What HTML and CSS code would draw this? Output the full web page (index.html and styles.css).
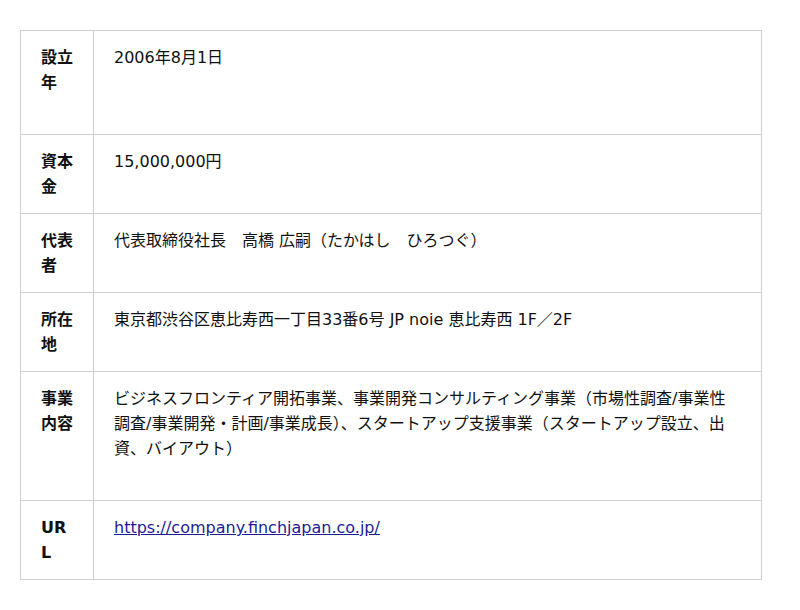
FILE: index.html
```html
<!DOCTYPE html>
<html lang="ja">
<head>
<meta charset="utf-8">
<title>会社概要</title>
<link rel="stylesheet" href="styles.css">
</head>
<body>
<div class="wrap">
  <table class="info">
    <tbody>
      <tr class="extra-2">
        <th>設立年</th>
        <td>2006年8月1日</td>
      </tr>
      <tr>
        <th>資本金</th>
        <td>15,000,000円</td>
      </tr>
      <tr>
        <th>代表者</th>
        <td>代表取締役社長　高橋 広嗣（たかはし　ひろつぐ）</td>
      </tr>
      <tr>
        <th>所在地</th>
        <td>東京都渋谷区恵比寿西一丁目33番6号 JP noie 恵比寿西 1F／2F</td>
      </tr>
      <tr class="extra-1">
        <th>事業内容</th>
        <td>ビジネスフロンティア開拓事業、事業開発コンサルティング事業（市場性調査/事業性調査/事業開発・計画/事業成長）、スタートアップ支援事業（スタートアップ設立、出資、バイアウト）</td>
      </tr>
      <tr>
        <th>URL</th>
        <td><a href="#">https://company.finchjapan.co.jp/</a></td>
      </tr>
    </tbody>
  </table>
</div>
</body>
</html>
```
FILE: styles.css
```css
html, body {
  margin: 0;
  padding: 0;
  background: #fff;
}
.wrap {
  padding: 30px 20px;
}
.info {
  width: 742px;
  border-collapse: collapse;
  table-layout: fixed;
  font-family: "DejaVu Sans", "Noto Sans CJK JP", sans-serif;
  font-size: 16px;
  line-height: 25px;
  color: #111;
}
.info th,
.info td {
  border: 1px solid #cfcfcf;
  padding: 14px 20px;
  vertical-align: top;
  text-align: left;
  word-break: break-all;
}
.info th {
  width: 32px;
  font-weight: bold;
}
.info tr.extra-1 td {
  padding-bottom: 39px;
}
.info tr.extra-2 td {
  padding-bottom: 64px;
}
.info a {
  color: #1c1c94;
  text-decoration: underline;
}
```
